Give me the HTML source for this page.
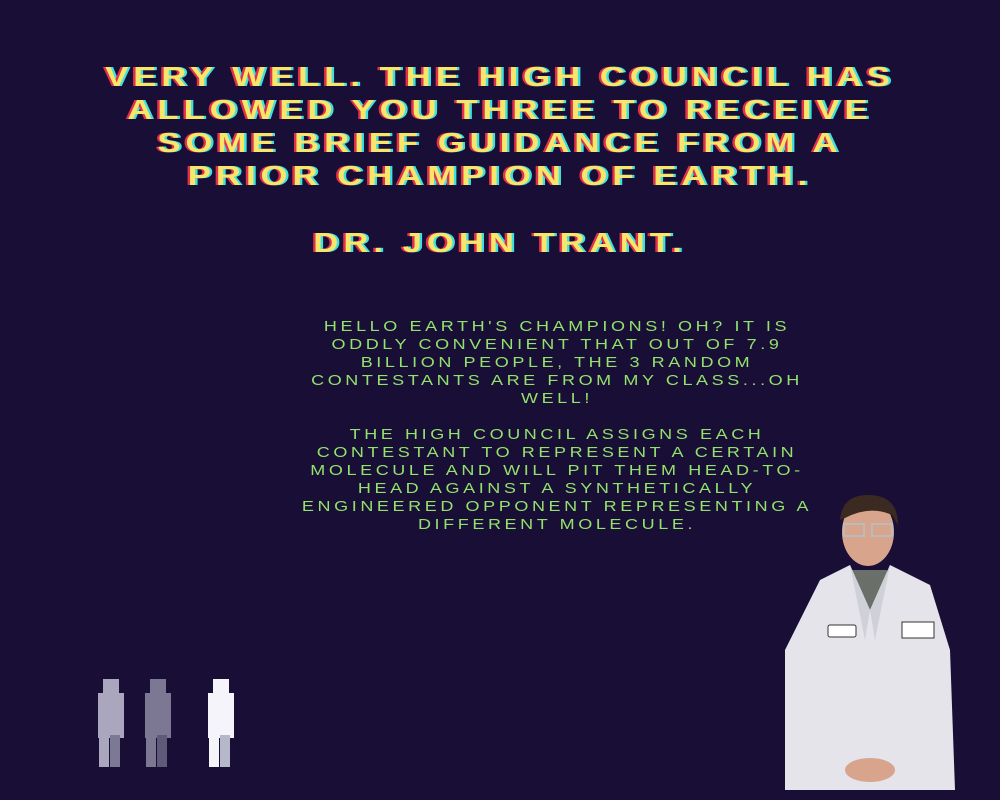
<!DOCTYPE html>
<html><head><style>
body{margin:0;width:1000px;height:800px;background:#190e36;overflow:hidden;position:relative;font-family:"Liberation Sans",sans-serif}
.t{position:absolute;left:0;width:1000px;text-align:center;color:#f8e66a;font-weight:bold;font-size:28px;line-height:33px;letter-spacing:4px;text-shadow:-2px 0 #e0304a,2px 0 #3fe0e0;white-space:nowrap;transform:scaleX(1.24)}
.g{position:absolute;left:257px;width:600px;text-align:center;color:#92e26c;font-size:15px;line-height:18px;letter-spacing:3px;white-space:nowrap;transform:scaleX(1.2)}
.f{position:absolute}
</style></head><body>
<div class="t" style="top:60px">VERY WELL. THE HIGH COUNCIL HAS<br>ALLOWED YOU THREE TO RECEIVE<br>SOME BRIEF GUIDANCE FROM A<br>PRIOR CHAMPION OF EARTH.</div>
<div class="t" style="top:226px">DR. JOHN TRANT.</div>
<div class="g" style="top:318px">HELLO EARTH'S CHAMPIONS! OH? IT IS<br>ODDLY CONVENIENT THAT OUT OF 7.9<br>BILLION PEOPLE, THE 3 RANDOM<br>CONTESTANTS ARE FROM MY CLASS...OH<br>WELL!<br><br>THE HIGH COUNCIL ASSIGNS EACH<br>CONTESTANT TO REPRESENT A CERTAIN<br>MOLECULE AND WILL PIT THEM HEAD-TO-<br>HEAD AGAINST A SYNTHETICALLY<br>ENGINEERED OPPONENT REPRESENTING A<br>DIFFERENT MOLECULE.</div>
<svg class="f" style="left:95px;top:675px" width="150" height="95">
<g fill="#aaa6bd"><rect x="8" y="4" width="16" height="14"/><rect x="3" y="18" width="26" height="45"/><rect x="4" y="60" width="10" height="32"/><rect x="15" y="60" width="10" height="32" fill="#7c7995"/></g>
<g fill="#7c7893"><rect x="55" y="4" width="16" height="14"/><rect x="50" y="18" width="26" height="45"/><rect x="51" y="60" width="10" height="32"/><rect x="62" y="60" width="10" height="32" fill="#5e5a78"/></g>
<g fill="#f4f4fa"><rect x="118" y="4" width="16" height="14"/><rect x="113" y="18" width="26" height="45"/><rect x="114" y="60" width="10" height="32"/><rect x="125" y="60" width="10" height="32" fill="#b5b8c8"/></g>
</svg>
<svg class="f" style="left:780px;top:490px" width="180" height="310">
<rect x="65" y="80" width="42" height="50" fill="#6a6f6a"/>
<path d="M40 90 L70 75 L90 120 L110 75 L150 95 L170 160 L175 300 L5 300 L5 160 Z" fill="#e4e4ea"/>
<path d="M70 75 L85 150 L90 120 Z M110 75 L95 150 L90 120Z" fill="#cfd0d8"/>
<ellipse cx="88" cy="42" rx="26" ry="34" fill="#d9a48c"/>
<path d="M60 30 Q62 5 88 5 Q118 5 118 35 L112 25 Q90 15 65 28Z" fill="#3a2a22"/>
<rect x="64" y="34" width="20" height="12" fill="none" stroke="#bbb" stroke-width="2"/>
<rect x="92" y="34" width="20" height="12" fill="none" stroke="#bbb" stroke-width="2"/>
<rect x="48" y="135" width="28" height="12" rx="2" fill="#fff" stroke="#333"/>
<rect x="122" y="132" width="32" height="16" fill="#fff" stroke="#333"/>
<ellipse cx="90" cy="280" rx="25" ry="12" fill="#d9a48c"/>
</svg>
</body></html>
